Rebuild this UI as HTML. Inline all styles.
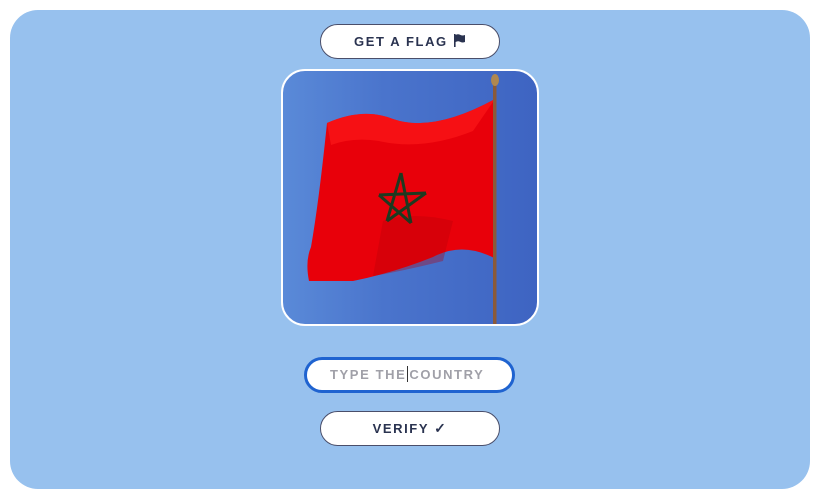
<!DOCTYPE html>
<html><head><style>
html,body{margin:0;padding:0;background:#fff;width:826px;height:499px;overflow:hidden}
.panel{position:absolute;left:10px;top:10px;width:800px;height:479px;background:#97c1ee;border-radius:28px}
.btn{position:absolute;background:#fff;border:1px solid #4a4e6a;border-radius:18px;font-family:"Liberation Sans",sans-serif;font-weight:bold;font-size:13px;letter-spacing:1.6px;color:#2a3350;text-align:center;box-sizing:border-box}
.img{position:absolute;left:281px;top:69px;width:258px;height:257px;border:2px solid #fff;border-radius:24px;box-sizing:border-box;overflow:hidden;background:linear-gradient(90deg,#5a8ad8,#4a74cc 40%,#3e64c2)}
.inp{position:absolute;left:304px;top:357px;width:211px;height:36px;border:3px solid #1f63d0;border-radius:18px;background:#fff;box-sizing:border-box;font-family:"Liberation Sans",sans-serif;font-weight:bold;font-size:13px;letter-spacing:1.6px;color:#a0a0a8;line-height:30px;padding-left:23px}
</style></head><body>
<div class="panel"></div>
<div class="btn" style="left:320px;top:24px;width:180px;height:35px;line-height:33px">GET A FLAG <svg width="13" height="13" viewBox="0 0 13 13" style="vertical-align:-1px"><path d="M1 0v13h1.6V8 Q5 6.5 7 7.8 9 9 12 8V1 Q9 2 7 0.8 5 -0.3 2.6 1V0z" fill="#2a3350"/></svg></div>
<div class="img"><svg width="254" height="253" viewBox="0 0 254 253">
<path d="M44 52 Q80 36 110 48 Q150 62 212 28 L213 188 Q180 170 150 186 Q110 202 70 210 L26 210 Q22 190 28 176 Q36 130 44 52Z" fill="#e8000a"/>
<path d="M44 52 Q80 36 110 48 Q150 62 212 28 L190 60 Q140 80 96 70 Q70 66 48 74Z" fill="#ff1a1a" opacity=".6"/>
<path d="M100 150 Q130 140 170 150 L160 190 Q120 200 90 205Z" fill="#b80008" opacity=".35"/>
<path d="M118 102 L128 152 M118 102 L104 150 M104 150 L143 122 M143 122 L96 124 M96 124 L128 152" stroke="#1d3a20" stroke-width="3" fill="none"/>
<rect x="210" y="10" width="3.5" height="245" fill="#8a5a3a"/>
<ellipse cx="212" cy="9" rx="4" ry="6" fill="#b08850"/>
</svg></div>
<div class="inp">TYPE THE<span style="display:inline-block;width:1px;height:16px;background:#333;vertical-align:-3px;margin:0 1px"></span>COUNTRY</div>
<div class="btn" style="left:320px;top:411px;width:180px;height:35px;line-height:33px">VERIFY <span style="font-size:14px">✓</span></div>
</body></html>
